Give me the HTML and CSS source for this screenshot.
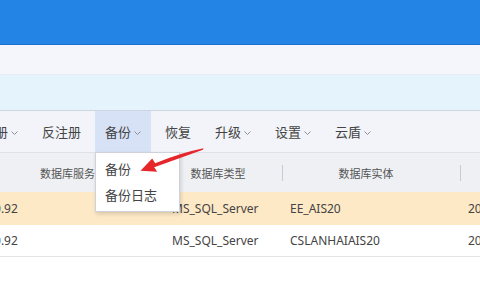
FILE: index.html
```html
<!DOCTYPE html>
<html lang="zh-CN">
<head>
    <meta charset="UTF-8">
    <title>数据库管理</title>
    <link rel="stylesheet" href="styles.css">
</head>
<body>
    <div class="titlebar"></div>
    <div class="band-top"></div>
    <div class="band-blue"></div>

    <div class="toolbar">
        <div class="tool">注册<svg class="chev" viewBox="0 0 7 4"><path d="M0.5 0.5 L3.5 3.5 L6.5 0.5"/></svg></div>
        <div class="tool">反注册</div>
        <div class="tool active">备份<svg class="chev" viewBox="0 0 7 4"><path d="M0.5 0.5 L3.5 3.5 L6.5 0.5"/></svg>
            <div class="dropdown">
                <div class="drop-item">备份</div>
                <div class="drop-item">备份日志</div>
            </div>
        </div>
        <div class="tool">恢复</div>
        <div class="tool">升级<svg class="chev" viewBox="0 0 7 4"><path d="M0.5 0.5 L3.5 3.5 L6.5 0.5"/></svg></div>
        <div class="tool">设置<svg class="chev" viewBox="0 0 7 4"><path d="M0.5 0.5 L3.5 3.5 L6.5 0.5"/></svg></div>
        <div class="tool">云盾<svg class="chev" viewBox="0 0 7 4"><path d="M0.5 0.5 L3.5 3.5 L6.5 0.5"/></svg></div>
    </div>

    <div class="grid">
        <div class="row head">
            <div class="cell first">数据库服务</div>
            <div class="cell sep">数据库类型</div>
            <div class="cell sep">数据库实体</div>
            <div class="cell"></div>
        </div>
        <div class="row selected">
            <div class="cell">10.0.0.92</div>
            <div class="cell">MS_SQL_Server</div>
            <div class="cell">EE_AIS20</div>
            <div class="cell">2019</div>
        </div>
        <div class="row">
            <div class="cell">10.0.0.92</div>
            <div class="cell">MS_SQL_Server</div>
            <div class="cell">CSLANHAIAIS20</div>
            <div class="cell">2019</div>
        </div>
    </div>

    <svg class="arrow" width="480" height="300" viewBox="0 0 480 300">
        <path d="M203.6 148.3 Q180 153 155.2 163.3 L152.2 158.6 L140.5 170.8 L157.2 171.8 L154.2 167.2 Q180 158 202.9 149.7 Z" fill="#e5262a"/>
    </svg>
</body>
</html>
```

FILE: styles.css
```css
body {
    margin: 0;
    width: 480px;
    height: 300px;
    overflow: hidden;
    background: #fff;
    font-family: "Noto Sans", "Noto Sans CJK SC", sans-serif;
    color: #333;
    position: relative;
}
.titlebar {
    height: 44px;
    background: #2384e6;
    border-bottom: 1px solid #1d72cb;
}
.band-top {
    height: 29px;
    background: #f5f6fb;
    border-bottom: 1px solid #e6edf5;
}
.band-blue {
    height: 35px;
    background: #e4f3fc;
    border-bottom: 1px solid #cdd6df;
}
.toolbar {
    display: flex;
    gap: 4px;
    height: 41px;
    margin-left: -28px;
    background: #f2f4f9;
    border-bottom: 1px solid #dde1e8;
}
.tool {
    position: relative;
    display: flex;
    align-items: center;
    padding: 0 10px;
    font-size: 13px;
    color: #444;
}
.tool.active {
    background: #d7e2f7;
}
.chev {
    width: 7px;
    height: 4px;
    margin-left: 3px;
    margin-top: 2px;
    fill: none;
    stroke: #8a8f99;
    stroke-width: 1;
}
.dropdown {
    position: absolute;
    top: 100%;
    left: 0;
    width: 83px;
    padding: 3px 0;
    background: #fff;
    border: 1px solid #cfd2d8;
    box-shadow: 1px 2px 4px rgba(0, 0, 0, 0.15);
    z-index: 2;
}
.drop-item {
    height: 26px;
    line-height: 26px;
    padding-left: 9px;
    font-size: 13px;
    color: #444;
}
.grid {
    margin-left: -40px;
}
.row {
    display: grid;
    grid-template-columns: 205px 118px 178px 1fr;
    height: 33px;
    align-items: center;
    font-size: 12px;
    color: #444;
}
.row.head {
    height: 39px;
    background: #eef0f4;
    font-size: 11px;
    color: #555;
}
.row.head .cell {
    text-align: center;
    padding: 0 12px 0 0;
}
.row.head .cell.first {
    padding: 0 0 0 10px;
}
.row.selected {
    background: #fde9c6;
}
.row:last-child {
    height: 31px;
    border-bottom: 1px solid #e3e5e9;
}
.cell {
    padding-left: 7px;
    white-space: nowrap;
    overflow: hidden;
    position: relative;
}
.head .sep::after {
    content: "";
    position: absolute;
    right: 0;
    top: -2px;
    height: 22px;
    border-right: 1px solid #c7cbd3;
}
.arrow {
    position: absolute;
    left: 0;
    top: 0;
    pointer-events: none;
    z-index: 3;
}
```
